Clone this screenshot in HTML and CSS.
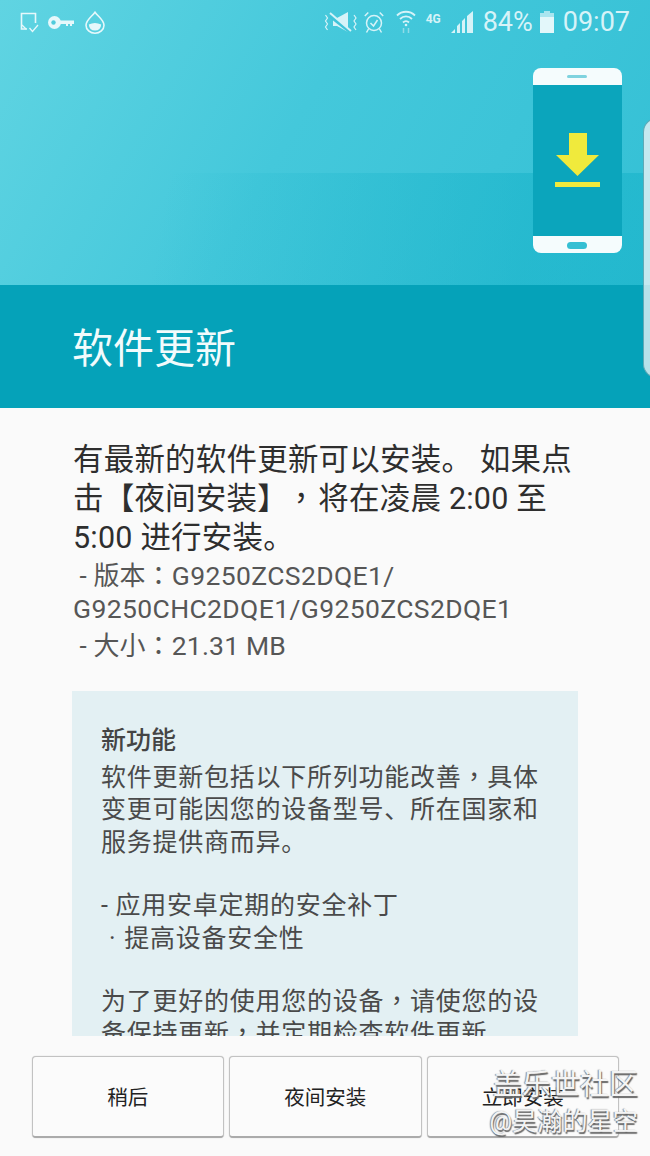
FILE: index.html
```html
<!DOCTYPE html>
<html lang="zh-CN">
<head>
<meta charset="utf-8">
<title>软件更新</title>
<link rel="stylesheet" href="styles.css">
</head>
<body>
<div class="screen">
  <header class="hero">
    <div class="shade"></div>
    <div class="status">
      <div class="status-left">
        <svg class="ico" width="19" height="21" viewBox="0 0 19 21" fill="none" stroke="#e6f8fb" stroke-width="1.6"><path d="M15.500 11V1.500H1.500V17H7"/><path d="M2 13l4 4" stroke-width="1.200"/><path d="M9.500 16l3 3.500 5.500-6.500" stroke-width="1.300"/></svg>
        <svg class="ico key" width="26" height="13" viewBox="0 0 26 13"><circle cx="6.500" cy="6.500" r="6.500" fill="#e6f8fb"/><circle cx="5.500" cy="6.500" r="2.200" fill="#4fcbdc"/><path d="M11 4.500h15v3.500h-2v2h-2V8h-2v2h-2V8h-7z" fill="#e6f8fb"/></svg>
        <svg class="ico drop" width="20" height="23" viewBox="0 0 20 23" fill="none" stroke="#e6f8fb" stroke-width="1.600"><path d="M10 1.200C7 5.500 1 9 1 14.200a9 8 0 0 0 18 0C19 9 13 5.500 10 1.200z"/><path d="M3.800 13.500q6-3 12.400 0q-.5 6-6.200 6t-6.200-6z" fill="#e6f8fb" stroke="none"/></svg>
      </div>
      <div class="status-right">
        <svg class="ico" width="33" height="23" viewBox="0 0 33 23" fill="none" stroke="#d6f3f8" stroke-width="1.200"><path d="M9 7h4l11-6v20l-11-6H9z" fill="#d6f3f8" stroke="none"/><path d="M6 5l19 15" stroke="#3fc4d9" stroke-width="3.500"/><path d="M6 2l21 18" stroke-width="2"/><path d="M1.500 4l2 3-2 3 2 3-2 3 2 3M30 4l2 3-2 3 2 3-2 3 2 3"/></svg>
        <svg class="ico clock" width="20" height="23" viewBox="0 0 20 23" fill="none" stroke="#d6f3f8" stroke-width="1.500"><circle cx="10" cy="12" r="7.500"/><path d="M6.500 12l3 3 4-6M.8 5L4.300 1.500M19.200 5L15.700 1.500M4.500 18l-2 3.500M15.500 18l2 3.500"/></svg>
        <svg class="ico wifi" width="20" height="24" viewBox="0 0 20 24" fill="none" stroke="#d6f3f8" stroke-width="1.800"><path d="M1 5.500c5-5 13-5 18 0M4 9c3.500-3.500 8.500-3.500 12 0M7 12.500c1.800-1.800 4.200-1.800 6 0"/><circle cx="10" cy="15" r="1.300" fill="#d6f3f8" stroke="none"/><path d="M7.500 18v5M12.500 18v5" stroke="#8fdbe8" stroke-width="1.500"/></svg>
        <span class="net">4G</span>
        <svg class="ico bars" width="23" height="23" viewBox="0 0 23 23" fill="#d6f3f8"><path d="M0 22l4-4v4zM6 22v-7l3-3v10zM11 22V10l3-3v15zM16 22V5l6-5v22z"/></svg>
        <span class="pct">84%</span>
        <svg class="ico batt" width="14" height="22" viewBox="0 0 14 22"><path d="M4 0h6v2H4z" fill="#a9e5ef"/><path d="M0 2h14v4H0z" fill="#a9e5ef"/><path d="M0 6h14v16H0z" fill="#e3f7fa"/></svg>
        <span class="time">09:07</span>
      </div>
    </div>
    <svg class="phone" width="89" height="185" viewBox="0 0 89 185">
      <rect width="89" height="185" rx="8" fill="#f5fcfd"/>
      <rect y="17" width="89" height="151" fill="#0ba5bc"/>
      <rect x="34" y="7" width="20" height="3" rx="1.500" fill="#7fd3df"/>
      <rect x="34" y="174" width="20" height="7" rx="3.500" fill="#35bfd3"/>
      <path d="M36 65h18v22h12l-21.500 21L23 87h13z" fill="#f0ea3c"/>
      <rect x="22" y="114" width="45" height="5" fill="#f0ea3c"/>
    </svg>
    <div class="edge"></div>
  </header>
  <div class="band">
    <h1 class="title">软件更新</h1>
    <div class="edge edge-band"></div>
  </div>
  <main class="content">
    <p class="lead">有最新的软件更新可以安装。 如果点击【夜间安装】<span class="pc pc-wide" lang="zh-Hant">，</span>将在凌晨 2:00 至 5:00 进行安装。</p>
    <p class="meta"><span class="ind"> - 版本<span class="pc" lang="zh-Hant">：</span></span>G9250ZCS2DQE1/<br>G9250CHC2DQE1/G9250ZCS2DQE1</p>
    <p class="meta meta-size"><span class="ind"> - 大小<span class="pc" lang="zh-Hant">：</span></span>21.31 MB</p>
    <section class="panel">
      <h2 class="panel-title">新功能</h2>
      <p class="panel-text">软件更新包括以下所列功能改善<span class="pc" lang="zh-Hant">，</span>具体变更可能因您的设备型号、所在国家和服务提供商而异。</p>
      <p class="panel-text gap">- 应用安卓定期的安全补丁<br><span class="dot"> · 提高设备安全性</span></p>
      <p class="panel-text gap">为了更好的使用您的设备<span class="pc" lang="zh-Hant">，</span>请使您的设备保持更新<span class="pc" lang="zh-Hant">，</span>并定期检查软件更新。</p>
    </section>
  </main>
  <footer class="actions">
    <button class="btn">稍后</button>
    <button class="btn">夜间安装</button>
    <button class="btn">立即安装</button>
  </footer>
  <div class="mark">
    <div class="mark-a">盖乐世社区</div>
    <div class="mark-b">@昊瀚的星空</div>
  </div>
</div>
</body>
</html>
```

FILE: styles.css
```css
* { box-sizing: border-box; }
html, body { margin: 0; padding: 0; }
body {
  width: 650px;
  height: 1156px;
  overflow: hidden;
  font-family: Roboto, "Noto Sans CJK SC", sans-serif;
  background: #fafafa;
}
.screen {
  position: relative;
  width: 650px;
  height: 1156px;
  display: flex;
  flex-direction: column;
  overflow: hidden;
}
.pc { font-family: "Noto Sans CJK TC", sans-serif; line-height: 0; }
.pc-wide { margin: 0 2px 0 13px; }
.hero {
  position: relative;
  height: 285px;
  flex: none;
  background: linear-gradient(120deg, #60d4e2 0%, #44c8db 45%, #34c0d5 100%);
}
.shade {
  position: absolute;
  left: 0; right: 0; top: 173px; bottom: 0;
  background: linear-gradient(100deg, rgba(15,175,198,0) 25%, rgba(15,175,198,.45) 80%);
}
.status {
  position: relative;
  height: 44px;
  display: flex;
  justify-content: space-between;
  align-items: center;
  padding: 0 20px;
}
.status-left { display: flex; align-items: center; gap: 10px; }
.key { margin-left: -1px; }
.drop { margin-left: 1px; }
.status-right { display: flex; align-items: center; color: #d6f3f8; }
.ico { display: block; flex: none; }
.clock { margin-left: 7px; }
.wifi { margin-left: 12px; }
.net { font-size: 12px; font-weight: 700; margin: 0 0 7px 10px; width: 16px; line-height: 12px; white-space: nowrap; }
.bars { margin-left: 9px; }
.pct { font-size: 27px; margin-left: 9px; line-height: 30px; }
.batt { margin-left: 7px; }
.time { font-size: 27px; margin-left: 9px; line-height: 30px; }
.phone { position: absolute; left: 533px; top: 68px; }
.edge {
  position: absolute;
  left: 643px;
  top: 118px;
  width: 20px;
  height: 167px;
  background: #c4e9f0;
  border: 1px solid #5fa9b6;
  border-bottom: 0;
  border-radius: 14px 0 0 0;
}
.band {
  position: relative;
  height: 123px;
  flex: none;
  background: #05a2b9;
  display: flex;
  align-items: center;
  padding: 0 72px;
}
.edge-band {
  top: 0;
  height: 93px;
  background: #b6e2ea;
  border-top: 0;
  border-bottom: 1px solid #5fa9b6;
  border-radius: 0 0 0 14px;
}
.title {
  margin: 0;
  font-size: 41px;
  font-weight: 400;
  color: #f2fbfc;
  line-height: 50px;
  position: relative;
  top: 2px;
}
.content {
  flex: 1;
  min-height: 0;
  padding: 32px 0 0 73px;
  display: flex;
  flex-direction: column;
}
.lead {
  margin: 0;
  width: 505px;
  font-size: 30.500px;
  letter-spacing: .2px;
  line-height: 39px;
  color: #2e2e2e;
}
.meta {
  margin: 2px 0 0;
  font-size: 26.500px;
  line-height: 33px;
  color: #565656;
  letter-spacing: .38px;
}
.meta-size { margin-top: 4px; letter-spacing: .2px; }
.ind { white-space: pre; font-size: 26px; letter-spacing: .1px; line-height: 0; }
.panel {
  margin: 29px 0 0 -1px;
  width: 506px;
  height: 345px;
  flex: none;
  overflow: hidden;
  background: #e3f0f3;
  padding: 33px 29px 0;
}
.panel-title {
  margin: 0;
  font-size: 25px;
  font-weight: 500;
  line-height: 33px;
  color: #444;
}
.panel-text {
  margin: 5px 0 0;
  width: 445px;
  font-size: 25px;
  letter-spacing: .75px;
  line-height: 32.400px;
  color: #4a4a4a;
}
.gap { margin-top: 31px; }
.dot { white-space: pre; word-spacing: 1px; }
.actions {
  position: absolute;
  left: 31.500px;
  top: 1056px;
  display: flex;
  gap: 5px;
}
.btn {
  width: 192.500px;
  height: 82px;
  background: #fbfbfb;
  border: 1px solid #c2c2c2;
  border-bottom: 2px solid #ababab;
  border-radius: 4px;
  box-shadow: 0 0 1px #bbb;
  font-family: inherit;
  font-size: 20.500px;
  color: #222;
  padding: 0 0 2px;
}
.mark {
  position: absolute;
  right: 12px;
  top: 1067px;
  text-align: right;
  color: #f4f4f4;
  text-shadow: 1px 2px 1px #666, -1px 0 1px #888;
}
.mark-a { font-size: 29px; line-height: 36px; }
.mark-b { font-size: 25.200px; line-height: 36px; margin-top: 1px; }
```
